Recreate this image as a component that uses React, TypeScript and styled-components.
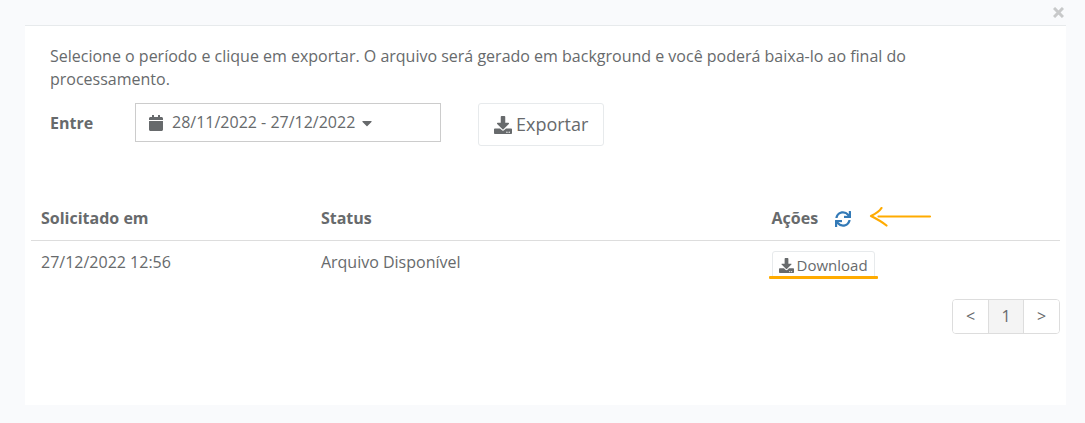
import React from "react";
import styled, { createGlobalStyle } from "styled-components";
import { FaCalendar, FaCaretDown, FaDownload, FaSync } from "react-icons/fa";

const GlobalStyle = createGlobalStyle`
  * { box-sizing: border-box; }
  body {
    margin: 0;
    background: #f9fafc;
    color: #676a6c;
    font-family: "Open Sans", "Noto Sans", sans-serif;
    font-size: 16px;
    line-height: 23px;
  }
  button { font: inherit; color: inherit; cursor: pointer; }
`;

const Modal = styled.div`
  padding: 0 19px 18px 25px;
`;

const ModalHeader = styled.header`
  display: flex;
  justify-content: flex-end;
  align-items: center;
  height: 25px;
`;

const CloseButton = styled.button`
  display: flex;
  padding: 0 2px;
  border: 0;
  background: none;
  color: #c8c9ca;
`;

const Panel = styled.main`
  min-height: 380px;
  padding: 19px 6px 24px;
  border-top: 1px solid #e7eaec;
  background: #fff;
`;

const Intro = styled.p`
  width: 88%;
  margin: 0 0 12px 19px;
`;

const FilterRow = styled.form`
  display: flex;
  align-items: flex-start;
  margin: 0 19px 50px;
`;

const FilterLabel = styled.label`
  width: 85px;
  padding-top: 9px;
  font-weight: 700;
`;

const DateRange = styled.button`
  display: flex;
  align-items: center;
  width: 306px;
  height: 39px;
  margin-right: 37px;
  padding: 0 12px;
  border: 1px solid #ccc;
  background: #fff;
`;

const DateText = styled.span`
  margin: 0 4px 0 8px;
`;

const ActionButton = styled.button<{ $large?: boolean }>`
  display: inline-flex;
  align-items: center;
  gap: ${(p) => (p.$large ? 4 : 3)}px;
  height: ${(p) => (p.$large ? 43 : 28)}px;
  padding: 0 ${(p) => (p.$large ? 15 : 6)}px;
  border: 1px solid #e7eaec;
  border-radius: 3px;
  background: #fff;
  font-size: ${(p) => (p.$large ? 18 : 15)}px;
  white-space: nowrap;
`;

const Table = styled.table`
  width: 100%;
  border-collapse: collapse;
  table-layout: fixed;
`;

const HeadCell = styled.th<{ $width?: string }>`
  width: ${(p) => p.$width ?? "auto"};
  padding: 11px 10px 10px;
  border-bottom: 1px solid #ddd;
  text-align: left;
`;

const Cell = styled.td`
  height: 46px;
  padding: 10px;
  vertical-align: top;
`;

const ActionsHeading = styled.div`
  display: flex;
  align-items: center;
`;

const RefreshButton = styled.button`
  display: flex;
  margin-left: 17px;
  padding: 0;
  border: 0;
  background: none;
  color: #337ab7;
`;

const PointerArrow = styled.svg`
  margin-left: 18px;
`;

const Highlighted = styled.div`
  position: relative;
  display: flex;
  width: max-content;
`;

const Underline = styled.span`
  position: absolute;
  right: -3px;
  bottom: 0;
  left: -3px;
  height: 3px;
  border-radius: 1px;
  background: #ffab00;
`;

const Pagination = styled.nav`
  display: flex;
  width: max-content;
  margin: 10px 0 0 auto;
  border: 1px solid #ddd;
  border-radius: 4px;
  overflow: hidden;
`;

const PageButton = styled.button<{ $active?: boolean }>`
  width: ${(p) => (p.$active ? 36 : 35)}px;
  height: 33px;
  padding: 0;
  border: solid #ddd;
  border-width: ${(p) => (p.$active ? "0 1px" : "0")};
  background: ${(p) => (p.$active ? "#f4f4f4" : "#fff")};
`;

export default function App() {
  return (
    <>
      <GlobalStyle />
      <Modal>
        <ModalHeader>
          <CloseButton type="button" aria-label="Fechar">
            <svg width="11" height="11" viewBox="0 0 11 11" stroke="currentColor" strokeWidth="3">
              <path d="M1 1l9 9M10 1l-9 9" />
            </svg>
          </CloseButton>
        </ModalHeader>
        <Panel>
          <Intro>
            Selecione o período e clique em exportar. O arquivo será gerado em background e você
            poderá baixa-lo ao final do processamento.
          </Intro>
          <FilterRow onSubmit={(e) => e.preventDefault()}>
            <FilterLabel htmlFor="periodo">Entre</FilterLabel>
            <DateRange id="periodo" type="button">
              <FaCalendar size={16} />
              <DateText>28/11/2022 - 27/12/2022</DateText>
              <FaCaretDown size={16} />
            </DateRange>
            <ActionButton $large type="submit">
              <FaDownload size={18} />
              Exportar
            </ActionButton>
          </FilterRow>
          <Table>
            <thead>
              <tr>
                <HeadCell $width="27.2%">Solicitado em</HeadCell>
                <HeadCell $width="43.8%">Status</HeadCell>
                <HeadCell>
                  <ActionsHeading>
                    Ações
                    <RefreshButton type="button" aria-label="Atualizar">
                      <FaSync size={16} />
                    </RefreshButton>
                    <PointerArrow
                      width="64"
                      height="23"
                      viewBox="0 0 64 23"
                      fill="none"
                      stroke="#ffab00"
                      strokeWidth="2.2"
                      strokeLinecap="round"
                      strokeLinejoin="round"
                      aria-hidden="true"
                    >
                      <path d="M9.500 9.500H61M12.500 1C10 5 6 7 2 9C7 11.500 12 14 17.500 18.500" />
                    </PointerArrow>
                  </ActionsHeading>
                </HeadCell>
              </tr>
            </thead>
            <tbody>
              <tr>
                <Cell>27/12/2022 12:56</Cell>
                <Cell>Arquivo Disponível</Cell>
                <Cell>
                  <Highlighted>
                    <ActionButton type="button">
                      <FaDownload size={15} />
                      Download
                    </ActionButton>
                    <Underline />
                  </Highlighted>
                </Cell>
              </tr>
            </tbody>
          </Table>
          <Pagination aria-label="Paginação">
            <PageButton type="button" aria-label="Anterior">&lt;</PageButton>
            <PageButton type="button" $active aria-current="page">1</PageButton>
            <PageButton type="button" aria-label="Próxima">&gt;</PageButton>
          </Pagination>
        </Panel>
      </Modal>
    </>
  );
}
